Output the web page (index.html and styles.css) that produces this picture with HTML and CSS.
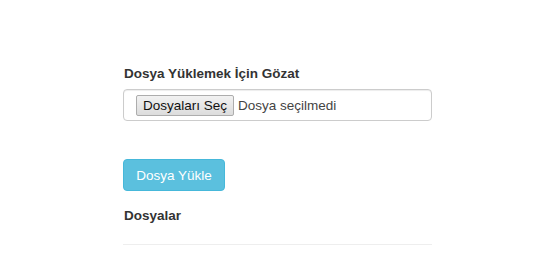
FILE: index.html
```html
<!DOCTYPE html>
<html lang="tr">
<head>
    <meta charset="UTF-8">
    <title>Dosya Yükle</title>
    <link rel="stylesheet" href="styles.css">
</head>
<body>
    <div class="container">
        <form class="upload-form">
            <div class="form-group">
                <label class="form-label">Dosya Yüklemek İçin Gözat</label>
                <div class="form-control file-control">
                    <span class="file-btn">Dosyaları Seç</span>
                    <span class="file-name">Dosya seçilmedi</span>
                </div>
            </div>
            <button type="button" class="btn btn-info">Dosya Yükle</button>
        </form>

        <h4 class="files-title">Dosyalar</h4>
        <hr class="divider">
    </div>
</body>
</html>
```

FILE: styles.css
```css
* {
    margin: 0;
    padding: 0;
    box-sizing: border-box;
}
body {
    font-family: "Liberation Sans", Arial, sans-serif;
    background-color: #fff;
    color: #333;
}
.container {
    width: 309px;
    margin-left: 123px;
    padding-top: 65px;
}
.form-group {
    display: flex;
    flex-direction: column;
    gap: 6px;
}
.form-label {
    font-weight: bold;
    font-size: 13.5px;
    line-height: 18px;
    color: #333;
    padding-left: 1px;
}
.form-control {
    height: 32px;
    border: 1px solid #ccc;
    border-radius: 4px;
    background: #fff;
    box-shadow: inset 0 1px 1px rgba(0,0,0,0.075);
}
.file-control {
    display: flex;
    align-items: center;
    gap: 4px;
    padding-left: 12px;
    font-size: 13.5px;
    color: #444;
}
.file-btn {
    height: 21px;
    line-height: 19px;
    padding: 0 6px;
    border: 1px solid #adadad;
    border-radius: 2px;
    background: linear-gradient(#f2f2f2, #dcdcdc);
    color: #111;
}
.file-name {
    color: #444;
}
.btn {
    margin-top: 38px;
    width: 102px;
    height: 32px;
    border: 1px solid #46b8da;
    border-radius: 4px;
    font-family: "Liberation Sans", Arial, sans-serif;
    font-size: 13.5px;
    cursor: pointer;
}
.btn-info {
    background-color: #5bc0de;
    color: #fff;
}
.files-title {
    margin-top: 16px;
    font-size: 13.5px;
    line-height: 18px;
    font-weight: bold;
    padding-left: 1px;
}
.divider {
    margin-top: 19px;
    border: 0;
    border-top: 1px solid #eee;
}
```
